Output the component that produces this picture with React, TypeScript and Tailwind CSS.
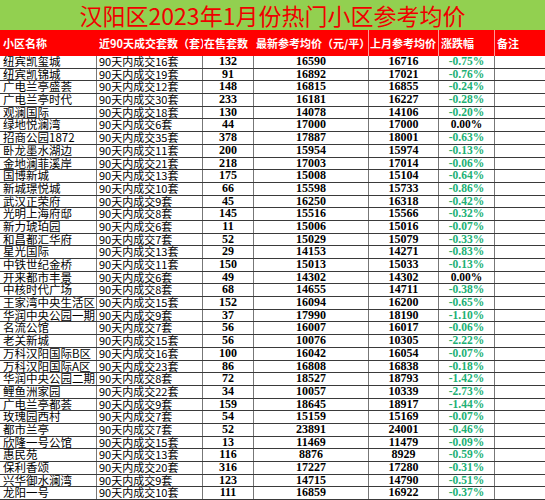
const rows: [string, number, number, number, number, string][] = [
  ["纽宾凯玺城", 16, 132, 16590, 16716, "-0.75%"],
  ["纽宾凯锦城", 19, 91, 16892, 17021, "-0.76%"],
  ["广电兰亭盛荟", 12, 148, 16815, 16855, "-0.24%"],
  ["广电兰亭时代", 30, 233, 16181, 16227, "-0.28%"],
  ["观澜国际", 18, 130, 14078, 14106, "-0.20%"],
  ["绿地悦澜湾", 6, 44, 17000, 17000, "0.00%"],
  ["招商公园1872", 35, 378, 17887, 18001, "-0.63%"],
  ["卧龙墨水湖边", 11, 200, 15954, 15974, "-0.13%"],
  ["金地澜菲溪岸", 21, 218, 17003, 17014, "-0.06%"],
  ["国博新城", 13, 175, 15008, 15104, "-0.64%"],
  ["新城璟悦城", 10, 66, 15598, 15733, "-0.86%"],
  ["武汉正荣府", 9, 45, 16250, 16318, "-0.42%"],
  ["光明上海府邸", 8, 145, 15516, 15566, "-0.32%"],
  ["新力琥珀园", 6, 11, 15006, 15016, "-0.07%"],
  ["和昌都汇华府", 7, 52, 15029, 15079, "-0.33%"],
  ["星光国际", 13, 29, 14153, 14271, "-0.83%"],
  ["中铁世纪金桥", 11, 150, 15013, 15033, "-0.13%"],
  ["开来都市丰景", 6, 49, 14302, 14302, "0.00%"],
  ["中核时代广场", 8, 68, 14655, 14711, "-0.38%"],
  ["王家湾中央生活区", 15, 152, 16094, 16200, "-0.65%"],
  ["华润中央公园一期", 9, 37, 17990, 18190, "-1.10%"],
  ["名流公馆", 7, 56, 16007, 16017, "-0.06%"],
  ["老关新城", 15, 56, 10076, 10305, "-2.22%"],
  ["万科汉阳国际B区", 16, 100, 16042, 16054, "-0.07%"],
  ["万科汉阳国际A区", 23, 86, 16808, 16838, "-0.18%"],
  ["华润中央公园二期", 8, 72, 18527, 18793, "-1.42%"],
  ["鲤鱼洲家园", 22, 34, 10057, 10339, "-2.73%"],
  ["广电兰亭都荟", 9, 159, 18645, 18917, "-1.44%"],
  ["玫瑰园西村", 7, 54, 15159, 15169, "-0.07%"],
  ["都市兰亭", 7, 52, 23891, 24001, "-0.46%"],
  ["欣隆一号公馆", 15, 13, 11469, 11479, "-0.09%"],
  ["惠民苑", 13, 116, 8876, 8929, "-0.59%"],
  ["保利香颂", 20, 316, 17227, 17280, "-0.31%"],
  ["兴华御水澜湾", 9, 123, 14715, 14790, "-0.51%"],
  ["龙阳一号", 10, 111, 16859, 16922, "-0.37%"],
];

const cjk = "font-['Noto_Sans_CJK_SC',sans-serif]";
const num = "font-['Liberation_Serif','Noto_Sans_CJK_SC',serif] font-bold";
const cols = "grid grid-cols-[97px_106px_51px_115px_70px_56px_50px]";

export default function App() {
  return (
    <div className="w-[545px] h-[500px] overflow-hidden bg-white">
      {/* title */}
      <div
        className={`h-[30px] bg-[#92d050] flex items-center justify-center text-[23px] leading-[30px] text-[#f00000] ${cjk}`}
      >
        汉阳区2023年1月份热门小区参考均价
      </div>

      {/* header */}
      <div
        className={`${cols} h-[26px] bg-[#ff0000] text-white text-[11px] font-bold leading-[26px] whitespace-nowrap ${cjk}`}
      >
        <div className="pl-[3px]">小区名称</div>
        <div className="pl-[2px] overflow-hidden">近90天成交套数（套）</div>
        <div className="pl-[1px]">在售套数</div>
        <div className="pl-[2px] border-r border-[#ff9a9a]">最新参考均价（元/平）</div>
        <div className="pl-[1px] border-r border-[#ff9a9a]">上月参考均价</div>
        <div className="pl-[2px] border-r border-[#ff9a9a]">涨跌幅</div>
        <div className="pl-[2px]">备注</div>
      </div>

      {/* rows */}
      {rows.map(([name, deals, stock, price, last, pct], i) => (
        <div
          key={i}
          className={`${cols} h-[12.7px] border-b border-[#3a3a3a] text-black leading-[11.7px] whitespace-nowrap`}
        >
          <div className={`pl-[3px] text-[11.5px] border-r border-[#777] ${cjk}`}>{name}</div>
          <div className={`pl-[2px] text-[11px] border-r border-[#777] ${cjk}`}>
            90天内成交{deals}套
          </div>
          <div className={`text-center text-[12px] border-r border-[#777] ${num}`}>{stock}</div>
          <div className={`text-center text-[12px] border-r border-[#777] ${num}`}>{price}</div>
          <div className={`text-center text-[12px] border-r border-[#777] ${num}`}>{last}</div>
          <div
            className={`text-center text-[11.5px] border-r border-[#777] ${num} ${
              pct.startsWith("-") ? "text-[#20b074]" : "text-black"
            }`}
          >
            {pct}
          </div>
          <div />
        </div>
      ))}
    </div>
  );
}
